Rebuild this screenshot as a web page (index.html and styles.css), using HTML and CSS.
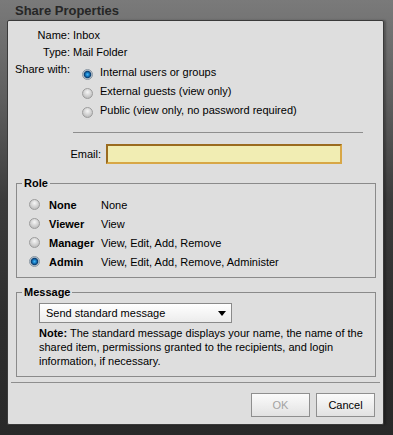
FILE: index.html
```html
<!DOCTYPE html>
<html lang="en">
<head>
    <meta charset="UTF-8">
    <title>Share Properties</title>
    <link rel="stylesheet" href="styles.css">
</head>
<body>
    <div class="dialog">
        <div class="dialog-title">Share Properties</div>
        <div class="dialog-panel">
            <div class="info-row">
                <span class="info-label">Name:</span>
                <span>Inbox</span>
            </div>
            <div class="info-row">
                <span class="info-label">Type:</span>
                <span>Mail Folder</span>
            </div>
            <div class="info-row">
                <span class="info-label">Share with:</span>
                <div class="share-options">
                    <div class="option"><span class="radio checked"></span>Internal users or groups</div>
                    <div class="option"><span class="radio"></span>External guests (view only)</div>
                    <div class="option"><span class="radio"></span>Public (view only, no password required)</div>
                </div>
            </div>
            <div class="divider"></div>
            <div class="email-row">
                <label class="email-label" for="email">Email:</label>
                <input class="email-input" id="email" type="text">
            </div>

            <fieldset class="group role-group">
                <legend>Role</legend>
                <div class="role-row"><span class="radio"></span><b class="role-name">None</b><span>None</span></div>
                <div class="role-row"><span class="radio"></span><b class="role-name">Viewer</b><span>View</span></div>
                <div class="role-row"><span class="radio"></span><b class="role-name">Manager</b><span>View, Edit, Add, Remove</span></div>
                <div class="role-row"><span class="radio checked"></span><b class="role-name">Admin</b><span>View, Edit, Add, Remove, Administer</span></div>
            </fieldset>

            <fieldset class="group message-group">
                <legend>Message</legend>
                <div class="select">Send standard message<span class="select-arrow"></span></div>
                <p class="note"><b>Note:</b> The standard message displays your name, the name of the<br>shared item, permissions granted to the recipients, and login<br>information, if necessary.</p>
            </fieldset>

            <div class="footer-line"></div>
            <div class="buttons">
                <button class="btn" disabled>OK</button>
                <button class="btn">Cancel</button>
            </div>
        </div>
    </div>
</body>
</html>
```

FILE: styles.css
```css
* {
    box-sizing: border-box;
}

body {
    margin: 0;
    width: 393px;
    height: 435px;
    overflow: hidden;
    font-family: 'Liberation Sans', Arial, sans-serif;
    font-size: 11px;
    color: #000;
    background: linear-gradient(#7a7a7a 0, #5e5e5e 100px, #3c3c3c 200px, #2e2e2e 320px, #292929 100%);
}

.dialog-title {
    height: 20px;
    padding-left: 15px;
    font-size: 13px;
    font-weight: bold;
    line-height: 21px;
    color: #262626;
}

.dialog-panel {
    margin-left: 7px;
    width: 377px;
    height: 405px;
    padding-top: 6px;
    background: #dedede;
    border: 1px solid #3a3a3a;
    border-radius: 2px;
    box-shadow: 2px 0 2px rgba(0, 0, 0, 0.25);
}

/* name / type / share rows */
.info-row {
    display: flex;
    line-height: 17px;
}

.info-label {
    width: 62px;
    margin-right: 3px;
    text-align: right;
    flex-shrink: 0;
}

.share-options {
    padding-top: 2px;
    padding-left: 9px;
}

.option {
    display: flex;
    align-items: flex-start;
    height: 19px;
    line-height: 19px;
}

.option .radio {
    margin-top: 6px;
    margin-right: 7px;
}

.radio {
    display: inline-block;
    width: 11px;
    height: 11px;
    border-radius: 50%;
    border: 1px solid #9c9c9c;
    background: radial-gradient(circle at 50% 35%, #f6f6f6 0, #e2e2e2 2px, #bcbcbc 6px);
    flex-shrink: 0;
}

.radio.checked {
    border-color: #8896a3;
    background: radial-gradient(circle, #45b8f5 0, #1c86cf 1.5px, #0a3f73 3.2px, #b4bec8 4.2px, #e6e6e6 5.5px);
}

.divider {
    height: 1px;
    margin: 12px 20px 0 65px;
    background: #8e8e8e;
}

.email-row {
    display: flex;
    align-items: center;
    margin-top: 11px;
}

.email-label {
    width: 93px;
    margin-right: 5px;
    text-align: right;
}

.email-input {
    width: 236px;
    height: 20px;
    margin: 0;
    border: 2px solid;
    border-color: #9a6b1f #d8a746 #d8a746 #9a6b1f;
    background: #f1edb3;
    outline: none;
}

/* fieldsets */
.group {
    margin: 0 7px 0 8px;
    padding: 0 5px;
    border: 1px solid #8a8a8a;
    min-width: 0;
}

.group legend {
    padding: 0 2px;
    font-weight: bold;
    font-size: 11px;
    line-height: 14px;
}

.role-group {
    margin-top: 12px;
    padding-top: 5px;
    padding-bottom: 6px;
}

.role-row {
    display: flex;
    align-items: center;
    height: 19px;
}

.role-row .radio {
    margin-left: 7px;
    margin-right: 9px;
}

.role-name {
    min-width: 52px;
    padding-right: 1px;
}

.message-group {
    margin-top: 7px;
    padding-top: 4px;
    padding-bottom: 8px;
}

.select {
    position: relative;
    width: 193px;
    height: 20px;
    margin-left: 17px;
    padding-left: 6px;
    line-height: 18px;
    border: 1px solid #8a8a8a;
    background: linear-gradient(#ffffff, #ececec);
}

.select-arrow {
    position: absolute;
    right: 5px;
    top: 7px;
    border-left: 4px solid transparent;
    border-right: 4px solid transparent;
    border-top: 5px solid #000;
}

.note {
    margin: 3px 0 0 17px;
    line-height: 14px;
}

/* footer */
.footer-line {
    height: 1px;
    margin: 5px 3px 0 3px;
    background: #8e8e8e;
}

.buttons {
    display: flex;
    justify-content: flex-end;
    gap: 6px;
    margin-top: 10px;
    padding-right: 8px;
}

.btn {
    width: 59px;
    height: 24px;
    padding: 0;
    font-family: 'Liberation Sans', Arial, sans-serif;
    font-size: 11px;
    color: #000;
    border: 1px solid #8f8f8f;
    background: linear-gradient(#fbfbfb, #e2e2e2);
}

.btn:disabled {
    color: #a3a3a3;
}
```
